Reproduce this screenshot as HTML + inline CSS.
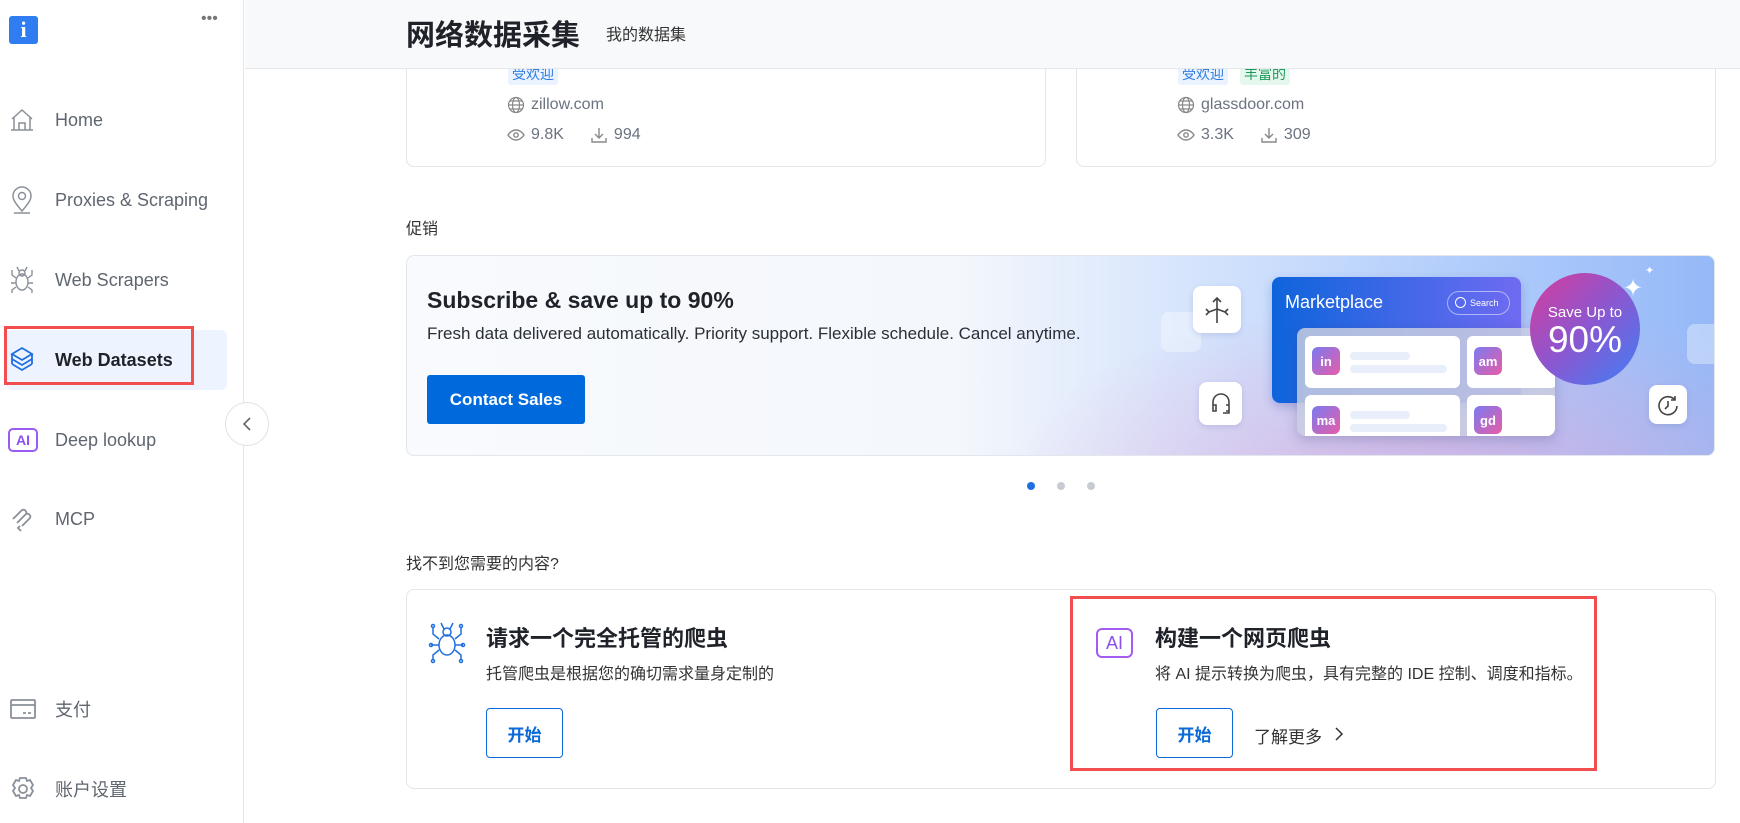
<!DOCTYPE html>
<html><head><meta charset="utf-8"><style>
*{box-sizing:border-box;margin:0;padding:0}
body{width:1740px;height:823px;overflow:hidden;background:#fff;font-family:"Liberation Sans","Noto Sans CJK SC",sans-serif;color:#1f2329;position:relative}
.abs{position:absolute}
.side{left:0;top:0;width:244px;height:823px;border-right:1px solid #e3e5e8;background:#fff}
.nav{position:absolute;left:0;width:244px;height:40px;display:flex;align-items:center;font-size:18px;color:#5f6670}
.nav svg{position:absolute;left:9px}
.nav span{position:absolute;left:55px}
.card{border:1px solid #e3e5e8;border-radius:8px;background:#fff}
.tag{font-size:14px;color:#2f7de1;background:#eaf3ff;padding:1px 4px;border-radius:3px}
.meta{font-size:16px;color:#6b7280;display:flex;align-items:center;gap:6px}
.btn2{border:1px solid #0a6ad6;border-radius:4px;color:#0a6ad6;font-weight:bold;font-size:17px;display:flex;align-items:center;justify-content:center;width:77px;height:50px}
.tile{background:#fff;border-radius:8px;box-shadow:0 2px 6px rgba(80,100,160,.18);display:flex;align-items:center;justify-content:center}
.logo{width:28px;height:28px;border-radius:6px;background:linear-gradient(135deg,#7a7af0,#e85ca8);color:#fff;font-weight:bold;font-size:13px;display:flex;align-items:center;justify-content:center}
.bar{background:#e9eefb;border-radius:4px;height:8px}
</style></head><body>

<div class="abs side">
  <div class="abs" style="left:9px;top:16px;width:29px;height:28px;background:#2f7df0;border-radius:3px;color:#fff;font:bold 22px 'Liberation Serif',serif;text-align:center;line-height:28px">i</div>
  <div class="abs" style="left:201px;top:10px;color:#777;font-size:16px">•••</div>
  <div class="nav" style="top:100px"><svg width="26" height="26" viewBox="0 0 26 26" fill="none" stroke="#8a9099" stroke-width="1.5"><path d="M3 12L13 3l10 9M5 10v13h16V10M10 23v-7h6v7M2 23h22"/></svg><span>Home</span></div>
  <div class="nav" style="top:180px"><svg width="26" height="30" viewBox="0 0 26 30" fill="none" stroke="#8a9099" stroke-width="1.5"><path d="M13 26C7 19 4 15 4 11a9 9 0 0118 0c0 4-3 8-9 15z"/><circle cx="13" cy="11" r="3.5"/><path d="M5 28h16"/></svg><span>Proxies &amp; Scraping</span></div>
  <div class="nav" style="top:260px"><svg width="26" height="30" viewBox="0 0 26 30" fill="none" stroke="#8a9099" stroke-width="1.4"><ellipse cx="13" cy="17" rx="6" ry="8"/><circle cx="13" cy="8" r="3"/><path d="M7 13L3 10V5M19 13l4-3V5M7 18H2M19 18h5M7 22l-4 3v3M19 22l4 3v3M10 6L8 2M16 6l2-4"/></svg><span>Web Scrapers</span></div>
  <div class="abs" style="left:6px;top:330px;width:221px;height:60px;background:#edf4ff;border-radius:6px"></div>
  <div class="abs" style="left:4px;top:326px;width:190px;height:59px;border:3px solid #f24d4f"></div>
  <div class="nav" style="top:340px;color:#1f2329;font-weight:bold"><svg width="26" height="30" viewBox="0 0 26 30" fill="none" stroke="#1f6fe0" stroke-width="1.8"><path d="M13 3l10 6-10 6-10-6z"/><path d="M3 14l10 6 10-6"/><path d="M3 19l10 6 10-6"/><path d="M3 9v10M23 9v10"/></svg><span>Web Datasets</span></div>
  <div class="nav" style="top:420px"><div class="abs" style="left:8px;width:30px;height:24px;border:2px solid #9a5cf0;border-radius:5px;color:#8c4ff0;font-weight:bold;font-size:14px;text-align:center;line-height:20px">AI</div><span>Deep lookup</span></div>
  <div class="nav" style="top:499px"><svg width="28" height="28" viewBox="0 0 28 28" fill="none" stroke="#8a9099" stroke-width="1.8"><path d="M4 14l9-9a3 3 0 014 4l-9 9M8 18l9-9a3 3 0 014 4l-8 8M11 21l-2 2 3 3"/></svg><span>MCP</span></div>
  <div class="nav" style="top:689px"><svg width="28" height="22" viewBox="0 0 28 22" fill="none" stroke="#8a9099" stroke-width="1.8"><rect x="2" y="2" width="24" height="18" rx="1"/><path d="M2 7h24M14 15h3M19 15h3"/></svg><span>支付</span></div>
  <div class="nav" style="top:769px"><svg width="28" height="28" viewBox="0 0 28 28" fill="none" stroke="#8a9099" stroke-width="1.8"><path d="M11 3h6l1 3 3-1 3 5-2 3 2 3-3 5-3-1-1 3h-6l-1-3-3 1-3-5 2-3-2-3 3-5 3 1z"/><circle cx="14" cy="14" r="4"/></svg><span>账户设置</span></div>
</div>
<div class="abs" style="left:225px;top:402px;width:44px;height:44px;border-radius:50%;border:1px solid #e0e2e5;background:#fff;display:flex;align-items:center;justify-content:center"><svg width="12" height="16" viewBox="0 0 12 16" fill="none" stroke="#666" stroke-width="1.6"><path d="M9 2L3 8l6 6"/></svg></div>

<div class="abs card" style="left:406px;top:40px;width:640px;height:127px;border-top:none;border-radius:0 0 8px 8px"></div>
<div class="abs card" style="left:1076px;top:40px;width:640px;height:127px;border-top:none;border-radius:0 0 8px 8px"></div>
<div class="abs tag" style="left:508px;top:63px">受欢迎</div>
<div class="abs meta" style="left:507px;top:96px"><svg width="18" height="18" viewBox="0 0 18 18" fill="none" stroke="#888" stroke-width="1.2"><circle cx="9" cy="9" r="7.5"/><ellipse cx="9" cy="9" rx="3.5" ry="7.5"/><path d="M1.5 9h15M3 5h12M3 13h12"/></svg>zillow.com</div>
<div class="abs meta" style="left:507px;top:126px"><svg width="18" height="14" viewBox="0 0 18 14" fill="none" stroke="#888" stroke-width="1.4"><path d="M1 7s3-5 8-5 8 5 8 5-3 5-8 5-8-5-8-5z"/><circle cx="9" cy="7" r="2.2"/></svg>9.8K<span style="width:14px"></span><svg width="18" height="18" viewBox="0 0 18 18" fill="none" stroke="#888" stroke-width="1.4"><path d="M9 2v10M5 8l4 4 4-4M2 12v4h14v-4"/></svg>994</div>
<div class="abs tag" style="left:1178px;top:63px">受欢迎</div>
<div class="abs tag" style="left:1240px;top:63px;color:#1a9a5a;background:#e6f7ee">丰富的</div>
<div class="abs meta" style="left:1177px;top:96px"><svg width="18" height="18" viewBox="0 0 18 18" fill="none" stroke="#888" stroke-width="1.2"><circle cx="9" cy="9" r="7.5"/><ellipse cx="9" cy="9" rx="3.5" ry="7.5"/><path d="M1.5 9h15M3 5h12M3 13h12"/></svg>glassdoor.com</div>
<div class="abs meta" style="left:1177px;top:126px"><svg width="18" height="14" viewBox="0 0 18 14" fill="none" stroke="#888" stroke-width="1.4"><path d="M1 7s3-5 8-5 8 5 8 5-3 5-8 5-8-5-8-5z"/><circle cx="9" cy="7" r="2.2"/></svg>3.3K<span style="width:14px"></span><svg width="18" height="18" viewBox="0 0 18 18" fill="none" stroke="#888" stroke-width="1.4"><path d="M9 2v10M5 8l4 4 4-4M2 12v4h14v-4"/></svg>309</div>
<div class="abs" style="left:245px;top:0;width:1495px;height:69px;background:#f8f9fa;border-bottom:1px solid #e6e8eb;z-index:2">
  <div class="abs" style="left:161px;top:12px;font-size:29px;font-weight:bold;color:#1f2329">网络数据采集</div>
  <div class="abs" style="left:361px;top:21px;font-size:16px;color:#333">我的数据集</div>
</div>

<div class="abs" style="left:406px;top:215px;font-size:16px;color:#333">促销</div>

<div class="abs" style="left:406px;top:255px;width:1309px;height:201px;border:1px solid #e3e6ec;border-radius:8px;overflow:hidden;background:linear-gradient(90deg,#f8fafd 0%,#f4f7fc 42%,#d2e2fc 62%,#b3cefb 80%,#95b9f7 100%)">
  <div class="abs" style="left:500px;top:0;width:809px;height:201px;background:radial-gradient(ellipse at 65% 130%,rgba(225,165,215,.75),rgba(225,170,220,0) 60%)"></div>
  <div class="abs" style="left:20px;top:31px;font-size:23px;font-weight:bold;color:#1f2329">Subscribe &amp; save up to 90%</div>
  <div class="abs" style="left:20px;top:68px;font-size:17px;color:#2a2f36">Fresh data delivered automatically. Priority support. Flexible schedule. Cancel anytime.</div>
  <div class="abs" style="left:20px;top:119px;width:158px;height:49px;background:#0069db;border-radius:3px;color:#fff;font-weight:bold;font-size:17px;display:flex;align-items:center;justify-content:center">Contact Sales</div>
  <div class="abs" style="left:754px;top:56px;width:40px;height:40px;background:rgba(255,255,255,.35);border-radius:8px"></div>
  <div class="abs" style="left:1280px;top:68px;width:40px;height:40px;background:rgba(255,255,255,.35);border-radius:8px"></div>
  <div class="abs tile" style="left:786px;top:30px;width:48px;height:47px"><svg width="28" height="30" viewBox="0 0 28 30" fill="none" stroke="#444" stroke-width="1.6"><path d="M14 28V3M10 7l4-4 4 4M14 14l-8 3M14 14l8 3M3 14l3 3-3 3M25 14l-3 3 3 3"/></svg></div>
  <div class="abs tile" style="left:792px;top:126px;width:43px;height:43px"><svg width="22" height="24" viewBox="0 0 22 24" fill="none" stroke="#444" stroke-width="1.6"><path d="M3 14V10a8 8 0 0116 0v4M3 13h3v6H3zM16 13h3v6h-3M19 19v2h-6"/></svg></div>
  <div class="abs tile" style="left:1242px;top:129px;width:38px;height:39px"><svg width="24" height="24" viewBox="0 0 24 24" fill="none" stroke="#444" stroke-width="1.6"><path d="M19 7a9 9 0 10 2 6M19 3v4h-4"/><path d="M12 8v5l-3 3"/></svg></div>
  <div class="abs" style="left:865px;top:21px;width:249px;height:126px;border-radius:8px;background:linear-gradient(90deg,#0e64dc,#6f6bf1);box-shadow:0 4px 10px rgba(40,60,160,.25)">
    <div class="abs" style="left:13px;top:15px;color:#fff;font-size:18px">Marketplace</div>
    <div class="abs" style="left:175px;top:14px;width:63px;height:24px;border:1px solid rgba(255,255,255,.5);border-radius:12px;color:#fff;font-size:9px;line-height:22px;padding-left:22px">Search<div class="abs" style="left:7px;top:5px;width:11px;height:11px;border:1.3px solid #fff;border-radius:50%"></div></div>
  </div>
  <div class="abs" style="left:890px;top:72px;width:258px;height:108px;border-radius:8px;background:rgba(200,205,225,.85);box-shadow:0 4px 12px rgba(60,60,120,.25);overflow:hidden">
    <div class="abs" style="left:8px;top:8px;width:155px;height:52px;background:#fff;border-radius:6px"><div class="abs logo" style="left:7px;top:11px">in</div><div class="abs bar" style="left:45px;top:16px;width:60px"></div><div class="abs bar" style="left:45px;top:29px;width:97px"></div></div>
    <div class="abs" style="left:170px;top:8px;width:90px;height:52px;background:#fff;border-radius:6px"><div class="abs logo" style="left:7px;top:11px">am</div></div>
    <div class="abs" style="left:8px;top:67px;width:155px;height:52px;background:#fff;border-radius:6px"><div class="abs logo" style="left:7px;top:11px">ma</div><div class="abs bar" style="left:45px;top:16px;width:60px"></div><div class="abs bar" style="left:45px;top:29px;width:97px"></div></div>
    <div class="abs" style="left:170px;top:67px;width:90px;height:52px;background:#fff;border-radius:6px"><div class="abs logo" style="left:7px;top:11px">gd</div></div>
  </div>
  <div class="abs" style="left:1123px;top:17px;width:110px;height:112px;border-radius:50%;background:linear-gradient(135deg,#d63c9a,#8b57d0 50%,#3f7ff5);color:#fff;text-align:center">
    <div style="margin-top:31px;font-size:15px">Save Up to</div>
    <div style="font-size:37px;line-height:38px">90%</div>
  </div>
  <div class="abs" style="left:1216px;top:18px;color:#fff;font-size:24px">✦</div>
  <div class="abs" style="left:1238px;top:8px;color:#fff;font-size:11px">✦</div>
</div>

<div class="abs" style="left:1027px;top:482px;width:8px;height:8px;border-radius:50%;background:#1f6fe0"></div>
<div class="abs" style="left:1057px;top:482px;width:8px;height:8px;border-radius:50%;background:#c8ccd2"></div>
<div class="abs" style="left:1087px;top:482px;width:8px;height:8px;border-radius:50%;background:#c8ccd2"></div>

<div class="abs" style="left:406px;top:550px;font-size:16px;color:#333">找不到您需要的内容?</div>

<div class="abs card" style="left:406px;top:589px;width:1310px;height:200px"></div>
<svg class="abs" style="left:428px;top:620px" width="38" height="44" viewBox="0 0 38 44" fill="none" stroke="#1f6fe0" stroke-width="1.5"><ellipse cx="19" cy="25" rx="8" ry="10"/><circle cx="19" cy="12" r="4"/><path d="M11 19L5 14V7M27 19l6-5V7M11 25H3M27 25h8M11 30l-6 5v5M27 30l6 5v5M16 9l-3-6M22 9l3-6"/><circle cx="5" cy="6" r="1.5"/><circle cx="33" cy="6" r="1.5"/><circle cx="3" cy="25" r="1.5"/><circle cx="35" cy="25" r="1.5"/><circle cx="5" cy="41" r="1.5"/><circle cx="33" cy="41" r="1.5"/></svg>
<div class="abs" style="left:486px;top:621px;font-size:22px;font-weight:bold">请求一个完全托管的爬虫</div>
<div class="abs" style="left:486px;top:660px;font-size:16px;color:#333">托管爬虫是根据您的确切需求量身定制的</div>
<div class="abs btn2" style="left:486px;top:708px">开始</div>

<div class="abs" style="left:1070px;top:596px;width:527px;height:175px;border:3px solid #f24d4f"></div>
<div class="abs" style="left:1096px;top:628px;width:37px;height:30px;border:2px solid #a45cf0;border-radius:6px;color:#8c4ff0;font-size:18px;text-align:center;line-height:26px">AI</div>
<div class="abs" style="left:1155px;top:621px;font-size:22px;font-weight:bold">构建一个网页爬虫</div>
<div class="abs" style="left:1155px;top:660px;font-size:16px;color:#333">将 AI 提示转换为爬虫，具有完整的 IDE 控制、调度和指标。</div>
<div class="abs btn2" style="left:1156px;top:708px">开始</div>
<div class="abs" style="left:1254px;top:723px;font-size:17px;color:#333">了解更多</div>
<svg class="abs" style="left:1334px;top:727px" width="10" height="14" viewBox="0 0 10 14" fill="none" stroke="#333" stroke-width="1.5"><path d="M2 1l6 6-6 6"/></svg>

</body></html>
